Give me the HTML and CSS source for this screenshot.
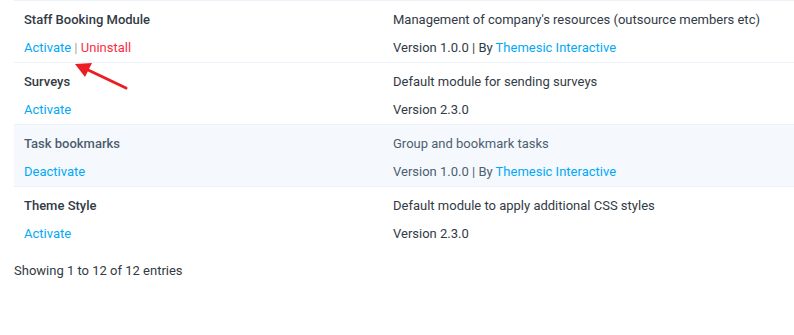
FILE: index.html
```html
<!DOCTYPE html>
<html lang="en">
<head>
    <meta charset="UTF-8">
    <meta name="viewport" content="width=device-width, initial-scale=1.0">
    <title>Modules</title>
    <link rel="stylesheet" href="styles.css">
</head>
<body>
    <div class="panel">
        <table class="modules">
            <tbody>
                <tr>
                    <td class="col-name">
                        <div class="title">Staff Booking Module</div>
                        <div class="actions"><a href="#">Activate</a> <span class="sep">|</span> <a href="#" class="danger">Uninstall</a></div>
                    </td>
                    <td>
                        <div class="desc">Management of company's resources (outsource members etc)</div>
                        <div class="meta">Version 1.0.0 | By <a href="#">Themesic Interactive</a></div>
                    </td>
                </tr>
                <tr>
                    <td class="col-name">
                        <div class="title">Surveys</div>
                        <div class="actions"><a href="#">Activate</a></div>
                    </td>
                    <td>
                        <div class="desc">Default module for sending surveys</div>
                        <div class="meta">Version 2.3.0</div>
                    </td>
                </tr>
                <tr class="hover">
                    <td class="col-name">
                        <div class="title">Task bookmarks</div>
                        <div class="actions"><a href="#">Deactivate</a></div>
                    </td>
                    <td>
                        <div class="desc">Group and bookmark tasks</div>
                        <div class="meta">Version 1.0.0 | By <a href="#">Themesic Interactive</a></div>
                    </td>
                </tr>
                <tr class="last">
                    <td class="col-name">
                        <div class="title">Theme Style</div>
                        <div class="actions"><a href="#">Activate</a></div>
                    </td>
                    <td>
                        <div class="desc">Default module to apply additional CSS styles</div>
                        <div class="meta">Version 2.3.0</div>
                    </td>
                </tr>
            </tbody>
        </table>
        <div class="info">Showing 1 to 12 of 12 entries</div>

        <!-- annotation arrow pointing at the separator -->
        <svg class="arrow" width="70" height="40" viewBox="0 0 70 40">
            <line x1="54" y1="27" x2="14" y2="8" stroke="#ec1c24" stroke-width="3" stroke-linecap="round"/>
            <polygon points="3,3 20,2 13,16" fill="#ec1c24"/>
        </svg>
    </div>
</body>
</html>
```

FILE: styles.css
```css
body {
    margin: 0;
    font-family: Roboto, "Noto Sans", sans-serif;
    font-size: 13px;
    color: #323a45;
    background: #fff;
}
.panel {
    position: relative;
    padding-left: 14px;
}
a {
    color: #03a9f4;
    text-decoration: none;
}
a.danger {
    color: #fc2d42;
}
.sep {
    color: #9aa4ae;
}
.modules {
    width: 780px;
    border-collapse: collapse;
    border-top: 1px solid #ebf2f9;
}
.modules tr {
    border-bottom: 1px solid #ebf2f9;
}
.modules tr.last {
    border-bottom: none;
}
.modules tr.hover {
    background-color: #f5f9fe;
    color: #4e5e6e;
}
.modules td {
    padding: 9px 10px 4px;
    vertical-align: top;
    line-height: 20px;
    text-align: left;
}
.modules td.col-name {
    width: 349px;
}
.title {
    font-weight: 500;
    margin-bottom: 8px;
}
.desc {
    margin-bottom: 8px;
}
.info {
    margin-top: 13px;
    line-height: 20px;
}
.arrow {
    position: absolute;
    left: 72px;
    top: 61px;
}
```
